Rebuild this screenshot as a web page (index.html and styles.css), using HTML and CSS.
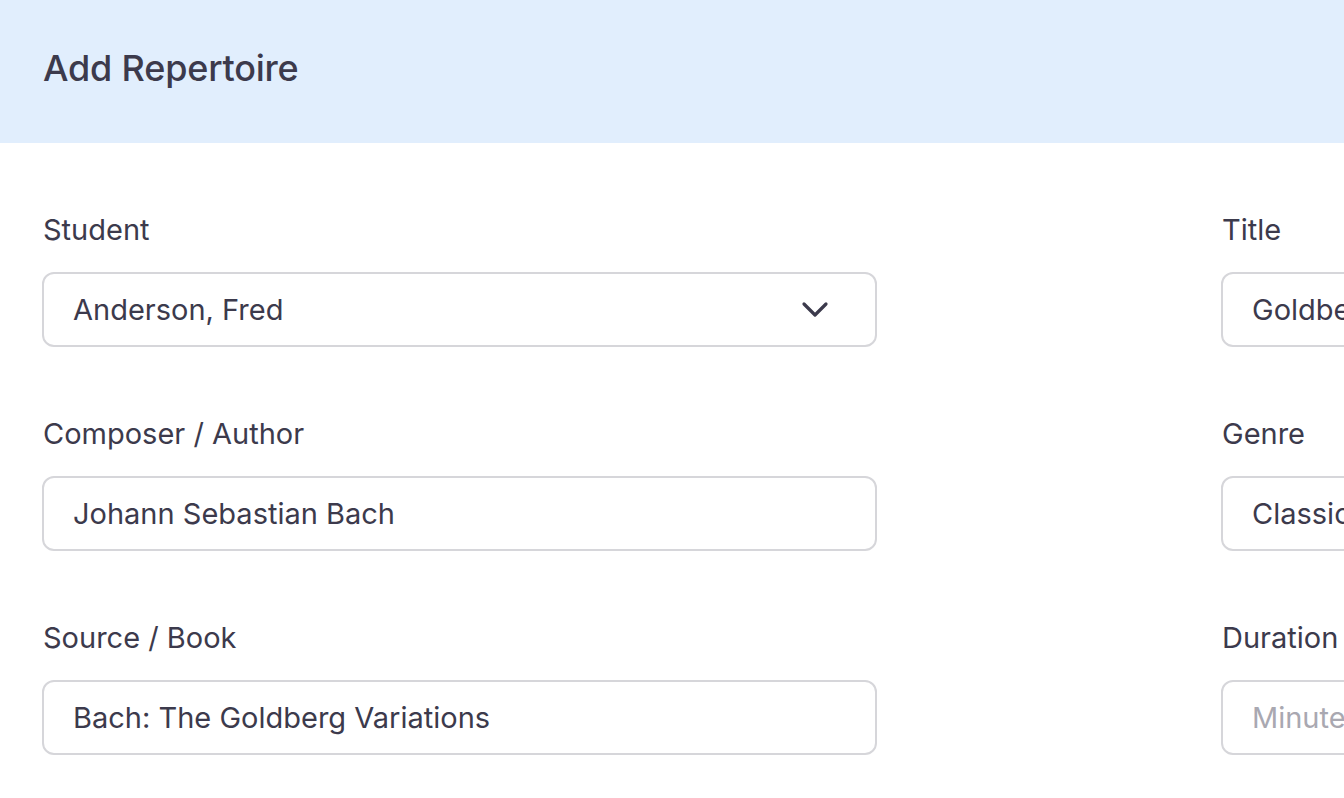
FILE: index.html
```html
<!DOCTYPE html>
<html lang="en">
<head>
<meta charset="utf-8">
<title>Add Repertoire</title>
<link rel="stylesheet" href="styles.css">
</head>
<body>
<header class="page-header">
  <h1 class="page-title">Add Repertoire</h1>
</header>
<div class="form-area">
  <main class="form-grid">
    <div class="field">
      <label class="field-label">Student</label>
      <div class="select-box">
        <span class="select-value">Anderson, Fred</span>
        <svg class="chevron" width="28" height="18" viewBox="0 0 28 18"><path d="M3 3 L14 14 L25 3" fill="none" stroke="#3c3a4c" stroke-width="3.2" stroke-linecap="round" stroke-linejoin="round"/></svg>
      </div>
    </div>
    <div class="field">
      <label class="field-label">Title</label>
      <input class="text-input" type="text" value="Goldberg Variations" readonly>
    </div>
    <div class="field">
      <label class="field-label">Composer / Author</label>
      <input class="text-input" type="text" value="Johann Sebastian Bach" readonly>
    </div>
    <div class="field">
      <label class="field-label">Genre</label>
      <input class="text-input" type="text" value="Classical" readonly>
    </div>
    <div class="field">
      <label class="field-label">Source / Book</label>
      <input class="text-input" type="text" value="Bach: The Goldberg Variations" readonly>
    </div>
    <div class="field">
      <label class="field-label">Duration</label>
      <input class="text-input" type="text" placeholder="Minutes" readonly>
    </div>
  </main>
</div>
</body>
</html>
```

FILE: styles.css
```css
html, body {
  margin: 0;
  padding: 0;
  overflow: hidden;
  background: #ffffff;
}

body {
  font-family: Inter, "Noto Sans", "Liberation Sans", sans-serif;
  color: #3c3a4c;
  width: 1344px;
  height: 798px;
}

.page-header {
  height: 143px;
  background: #e1eefd;
  display: flex;
  align-items: center;
  padding-left: 43px;
  box-sizing: border-box;
}

.page-title {
  margin: 0;
  font-size: 36px;
  font-weight: 500;
  color: #3c3a4c;
  letter-spacing: -0.2px;
  position: relative;
  top: -4px;
}

.form-area {
  width: 1344px;
  overflow: hidden;
}

.form-grid {
  display: grid;
  grid-template-columns: 835px 835px;
  column-gap: 344px;
  row-gap: 67px;
  padding: 67px 0 0 42px;
  width: max-content;
}

.field {
  display: flex;
  flex-direction: column;
  gap: 22px;
}

.field-label {
  font-size: 29px;
  line-height: 40px;
  height: 40px;
  padding-left: 1px;
  color: #3c3a4c;
}

.select-box,
.text-input {
  box-sizing: border-box;
  height: 75px;
  width: 835px;
  border: 2px solid #d6d6da;
  border-radius: 12px;
  background: #ffffff;
  font-family: inherit;
  font-size: 29px;
  color: #3c3a4c;
  padding: 0 0 0 29px;
  margin: 0;
  outline: none;
}

.select-box {
  display: flex;
  align-items: center;
  justify-content: space-between;
  padding-right: 46px;
}

.chevron {
  display: block;
}

.text-input::placeholder {
  color: #a9a8b1;
}
```
